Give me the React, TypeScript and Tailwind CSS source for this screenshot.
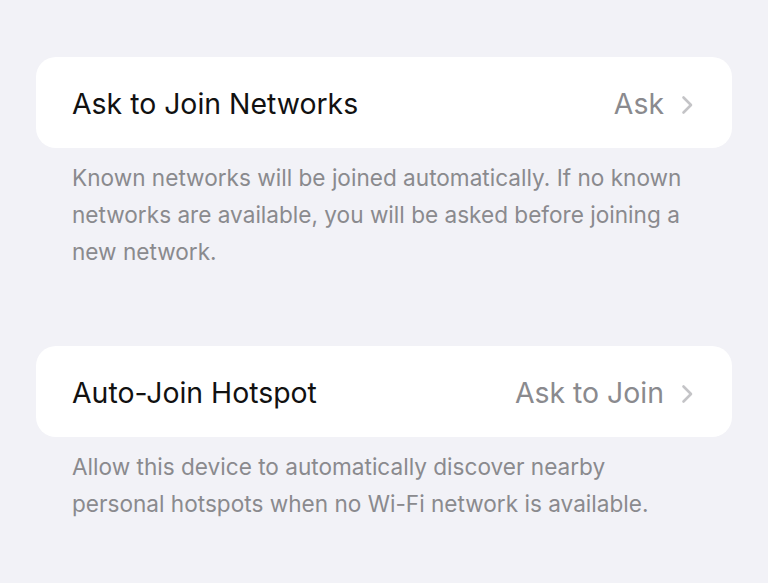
import React from "react";

function Chevron() {
  return (
    <svg width="14" height="20" viewBox="0 0 14 20" fill="none" className="ml-[16px]">
      <path d="M3.5 2.5 L11 10 L3.5 17.5" stroke="#c4c4c7" strokeWidth="2.6" strokeLinecap="round" strokeLinejoin="round" />
    </svg>
  );
}

interface RowProps {
  title: string;
  value: string;
  footer: string;
}

function SettingsGroup({ title, value, footer }: RowProps) {
  return (
    <div>
      <div className="mx-[36px] flex h-[91px] items-center rounded-[20px] bg-white pl-[36px] pr-[38px] pt-[4px]">
        <span className="flex-1 text-[28.4px] text-[#111111]">{title}</span>
        <span className="text-[28.4px] text-[#8a8a8e]">{value}</span>
        <Chevron />
      </div>
      <p className="mt-[11px] pl-[72px] pr-[76px] text-[22.6px] leading-[37px] text-[#8a8a8e]">{footer}</p>
    </div>
  );
}

export default function App() {
  return (
    <div className="min-h-[583px] bg-[#f2f2f7] pt-[57px] font-['Inter',sans-serif]">
      <SettingsGroup
        title="Ask to Join Networks"
        value="Ask"
        footer="Known networks will be joined automatically. If no known networks are available, you will be asked before joining a new network."
      />
      <div className="h-[76px]" />
      <SettingsGroup
        title="Auto-Join Hotspot"
        value="Ask to Join"
        footer="Allow this device to automatically discover nearby personal hotspots when no Wi-Fi network is available."
      />
    </div>
  );
}
